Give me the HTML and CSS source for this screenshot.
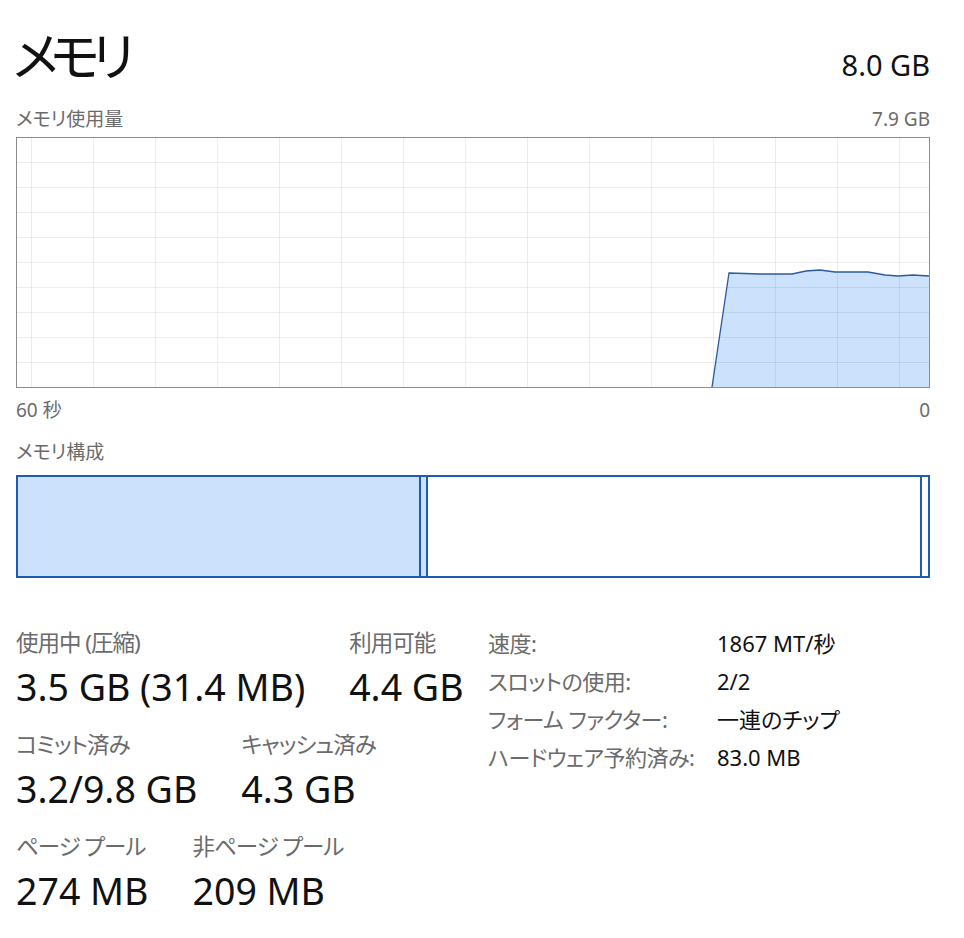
FILE: index.html
```html
<!DOCTYPE html>
<html lang="ja">
<head>
<meta charset="utf-8">
<title>メモリ</title>
<link rel="stylesheet" href="styles.css">
</head>
<body>
<div class="page">
  <div class="head">
    <div class="title">メモリ</div>
    <div class="total">8.0 GB</div>
  </div>
  <div class="sub">
    <span>メモリ使用量</span>
    <span>7.9 GB</span>
  </div>
  <div class="graph">
    <svg class="graph-svg" width="912" height="249" viewBox="0 0 912 249">
      <polygon class="area" points="695,249 712,135 743,136 775,136 789,133 803,132 818,134 851,134 868,137 881,138 896,137 912,138 912,249"/>
      <g class="grid">
        <line x1="0" y1="24.5" x2="912" y2="24.5"/>
        <line x1="0" y1="49.5" x2="912" y2="49.5"/>
        <line x1="0" y1="74.5" x2="912" y2="74.5"/>
        <line x1="0" y1="99.5" x2="912" y2="99.5"/>
        <line x1="0" y1="124.5" x2="912" y2="124.5"/>
        <line x1="0" y1="149.5" x2="912" y2="149.5"/>
        <line x1="0" y1="174.5" x2="912" y2="174.5"/>
        <line x1="0" y1="199.5" x2="912" y2="199.5"/>
        <line x1="0" y1="224.5" x2="912" y2="224.5"/>
        <line x1="14.5" y1="0" x2="14.5" y2="249"/>
        <line x1="76.5" y1="0" x2="76.5" y2="249"/>
        <line x1="138.5" y1="0" x2="138.5" y2="249"/>
        <line x1="200.5" y1="0" x2="200.5" y2="249"/>
        <line x1="262.5" y1="0" x2="262.5" y2="249"/>
        <line x1="324.5" y1="0" x2="324.5" y2="249"/>
        <line x1="386.5" y1="0" x2="386.5" y2="249"/>
        <line x1="448.5" y1="0" x2="448.5" y2="249"/>
        <line x1="510.5" y1="0" x2="510.5" y2="249"/>
        <line x1="572.5" y1="0" x2="572.5" y2="249"/>
        <line x1="634.5" y1="0" x2="634.5" y2="249"/>
        <line x1="696.5" y1="0" x2="696.5" y2="249"/>
        <line x1="758.5" y1="0" x2="758.5" y2="249"/>
        <line x1="820.5" y1="0" x2="820.5" y2="249"/>
        <line x1="882.5" y1="0" x2="882.5" y2="249"/>
      </g>
      <polyline class="edge" points="695,249 712,135 743,136 775,136 789,133 803,132 818,134 851,134 868,137 881,138 896,137 912,138"/>
    </svg>
  </div>
  <div class="axis">
    <span>60 秒</span>
    <span>0</span>
  </div>
  <div class="sub comp-label">メモリ構成</div>
  <div class="bar">
    <div class="seg seg-inuse"></div>
    <div class="seg seg-mod"></div>
    <div class="seg seg-standby"></div>
    <div class="seg seg-free"></div>
  </div>
  <div class="stats">
    <div class="stats-left">
      <div class="stat-row">
        <div class="stat">
          <div class="stat-label">使用中 (圧縮)</div>
          <div class="stat-value">3.5 GB (31.4 MB)</div>
        </div>
        <div class="stat">
          <div class="stat-label">利用可能</div>
          <div class="stat-value">4.4 GB</div>
        </div>
      </div>
      <div class="stat-row">
        <div class="stat">
          <div class="stat-label">コミット済み</div>
          <div class="stat-value">3.2/9.8 GB</div>
        </div>
        <div class="stat">
          <div class="stat-label">キャッシュ済み</div>
          <div class="stat-value">4.3 GB</div>
        </div>
      </div>
      <div class="stat-row">
        <div class="stat">
          <div class="stat-label">ページ プール</div>
          <div class="stat-value">274 MB</div>
        </div>
        <div class="stat">
          <div class="stat-label">非ページ プール</div>
          <div class="stat-value">209 MB</div>
        </div>
      </div>
    </div>
    <div class="props">
      <div class="prop-key">速度:</div><div class="prop-val">1867 MT/秒</div>
      <div class="prop-key">スロットの使用:</div><div class="prop-val">2/2</div>
      <div class="prop-key">フォーム ファクター:</div><div class="prop-val">一連のチップ</div>
      <div class="prop-key">ハードウェア予約済み:</div><div class="prop-val">83.0 MB</div>
    </div>
  </div>
</div>
</body>
</html>
```

FILE: styles.css
```css
html, body {
  margin: 0;
  padding: 0;
  background: #ffffff;
}

body {
  font-family: "Noto Sans", "Noto Sans CJK JP", sans-serif;
  font-feature-settings: "palt";
  color: #000000;
}

.page {
  width: 914px;
  padding: 0 34px 0 16px;
}

.head {
  display: flex;
  justify-content: space-between;
  align-items: baseline;
  height: 100px;
  padding-top: 22px;
  box-sizing: border-box;
}

.title {
  font-family: "Noto Sans CJK JP", sans-serif;
  font-size: 52px;
  line-height: 64px;
  letter-spacing: -8px;
  margin-left: -3px;
  color: #111111;
}

.total {
  font-size: 29px;
  line-height: 64px;
  color: #111111;
}

.sub {
  display: flex;
  justify-content: space-between;
  font-size: 19px;
  line-height: 26px;
  color: #6b6b6b;
  margin-top: 6px;
}

.graph {
  margin-top: 5px;
  width: 914px;
  height: 251px;
  box-sizing: border-box;
  border: 1px solid #8c8c8c;
}

.graph-svg {
  display: block;
}

.area {
  fill: #cce1fb;
}

.grid line {
  stroke: rgba(0, 0, 0, 0.07);
  stroke-width: 1;
}

.edge {
  fill: none;
  stroke: #2c5aa0;
  stroke-width: 1.3;
}

.axis {
  display: flex;
  justify-content: space-between;
  font-size: 19px;
  line-height: 26px;
  color: #6b6b6b;
  margin-top: 9px;
}

.comp-label {
  margin-top: 16px;
}

.bar {
  margin-top: 10px;
  display: flex;
  width: 914px;
  height: 103px;
  box-sizing: border-box;
  border: 2px solid #1e5cb3;
}

.seg {
  height: 100%;
}

.seg-inuse {
  width: 401px;
  background: #cce1fb;
  border-right: 2px solid #1e5cb3;
}

.seg-mod {
  width: 5px;
  background: #cce1fb;
  border-right: 2px solid #1e5cb3;
}

.seg-standby {
  flex: 1;
  border-right: 2px solid #1e5cb3;
}

.seg-free {
  width: 6px;
}

.stats {
  display: grid;
  grid-template-columns: 472px auto;
  margin-top: 50px;
}

.stats-left {
  display: flex;
  flex-direction: column;
  gap: 20px;
}

.stat-row {
  display: flex;
  gap: 44px;
}

.stat-label {
  font-size: 22.5px;
  line-height: 30px;
  letter-spacing: -1px;
  color: #6b6b6b;
  white-space: nowrap;
}

.stat-value {
  font-size: 37.5px;
  line-height: 46px;
  padding-top: 6px;
  color: #111111;
  white-space: nowrap;
}

.props {
  display: grid;
  grid-template-columns: 229px auto;
  grid-auto-rows: 38px;
  font-size: 22px;
  line-height: 30px;
  align-content: start;
}

.prop-key {
  color: #6b6b6b;
  white-space: nowrap;
  letter-spacing: -0.5px;
}

.prop-val {
  color: #111111;
  white-space: nowrap;
}
```
